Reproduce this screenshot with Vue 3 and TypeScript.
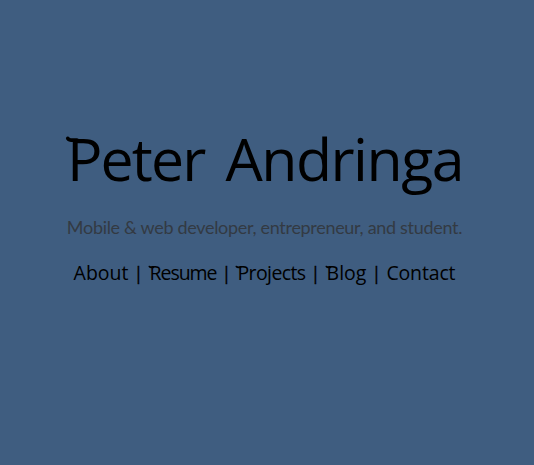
<script setup lang="ts">
interface Link {
  label: string
  tracking: number
  hooked: boolean
}

const links: Link[] = [
  { label: 'About', tracking: 0, hooked: false },
  { label: 'Resume', tracking: -1.05, hooked: true },
  { label: 'Projects', tracking: -0.6, hooked: true },
  { label: 'Blog', tracking: 0, hooked: true },
  { label: 'Contact', tracking: -0.15, hooked: false },
]
</script>

<template>
  <main class="page">
    <h1>
      <span class="first"
        ><svg class="swash" viewBox="0 0 12 8"><path d="M1 1.5C3 4.5 7 3.5 12 3.5" /></svg>Peter</span
      >
      <span class="last">Andringa</span>
    </h1>
    <p class="tagline">Mobile &amp; web developer, entrepreneur, and student.</p>
    <nav>
      <template v-for="(link, i) in links" :key="link.label">
        <span v-if="i > 0" class="sep">|</span>
        <a :class="{ hooked: link.hooked }" :style="{ letterSpacing: link.tracking + 'px' }"
          ><svg v-if="link.hooked" class="swash" viewBox="0 0 12 8"><path d="M1 1.5C3 4.5 7 3.5 12 3.5" /></svg
          >{{ link.label }}</a
        >
      </template>
    </nav>
  </main>
</template>

<style>
body {
  margin: 0;
  background: #3f5d80;
}
</style>

<style scoped>
.page {
  height: 465px;
  box-sizing: border-box;
  padding: 122px 5px 0 0;
  display: flex;
  flex-direction: column;
  align-items: center;
  background: #3f5d80;
  color: #000;
}
h1 {
  display: flex;
  gap: 21px;
  margin: 0;
  font: 400 59px/72px "Open Sans", sans-serif;
  white-space: nowrap;
}
.first {
  position: relative;
  letter-spacing: -1.9px;
  padding-left: 1px;
}
.last {
  letter-spacing: -1.5px;
}
.swash {
  position: absolute;
  left: 1px;
  top: 15px;
  width: 10px;
  height: 7px;
  fill: none;
  stroke: #000;
  stroke-width: 4.5;
  stroke-linecap: round;
  overflow: visible;
}
.tagline {
  margin: 21px 0 0;
  font: 400 18px/24px Lato, sans-serif;
  letter-spacing: -0.31px;
  color: #333a43;
  white-space: nowrap;
}
nav {
  margin: 22px 0 0;
  display: flex;
  align-items: center;
  font: 400 19.5px/24px "Open Sans", sans-serif;
  white-space: nowrap;
}
.sep {
  width: 20px;
  text-align: center;
  font-size: 18px;
  -webkit-text-stroke: 0.3px #000;
}
.hooked {
  position: relative;
  padding-left: 1px;
}
.hooked .swash {
  left: 0;
  top: 5px;
  width: 4.5px;
  height: 3px;
}
</style>
